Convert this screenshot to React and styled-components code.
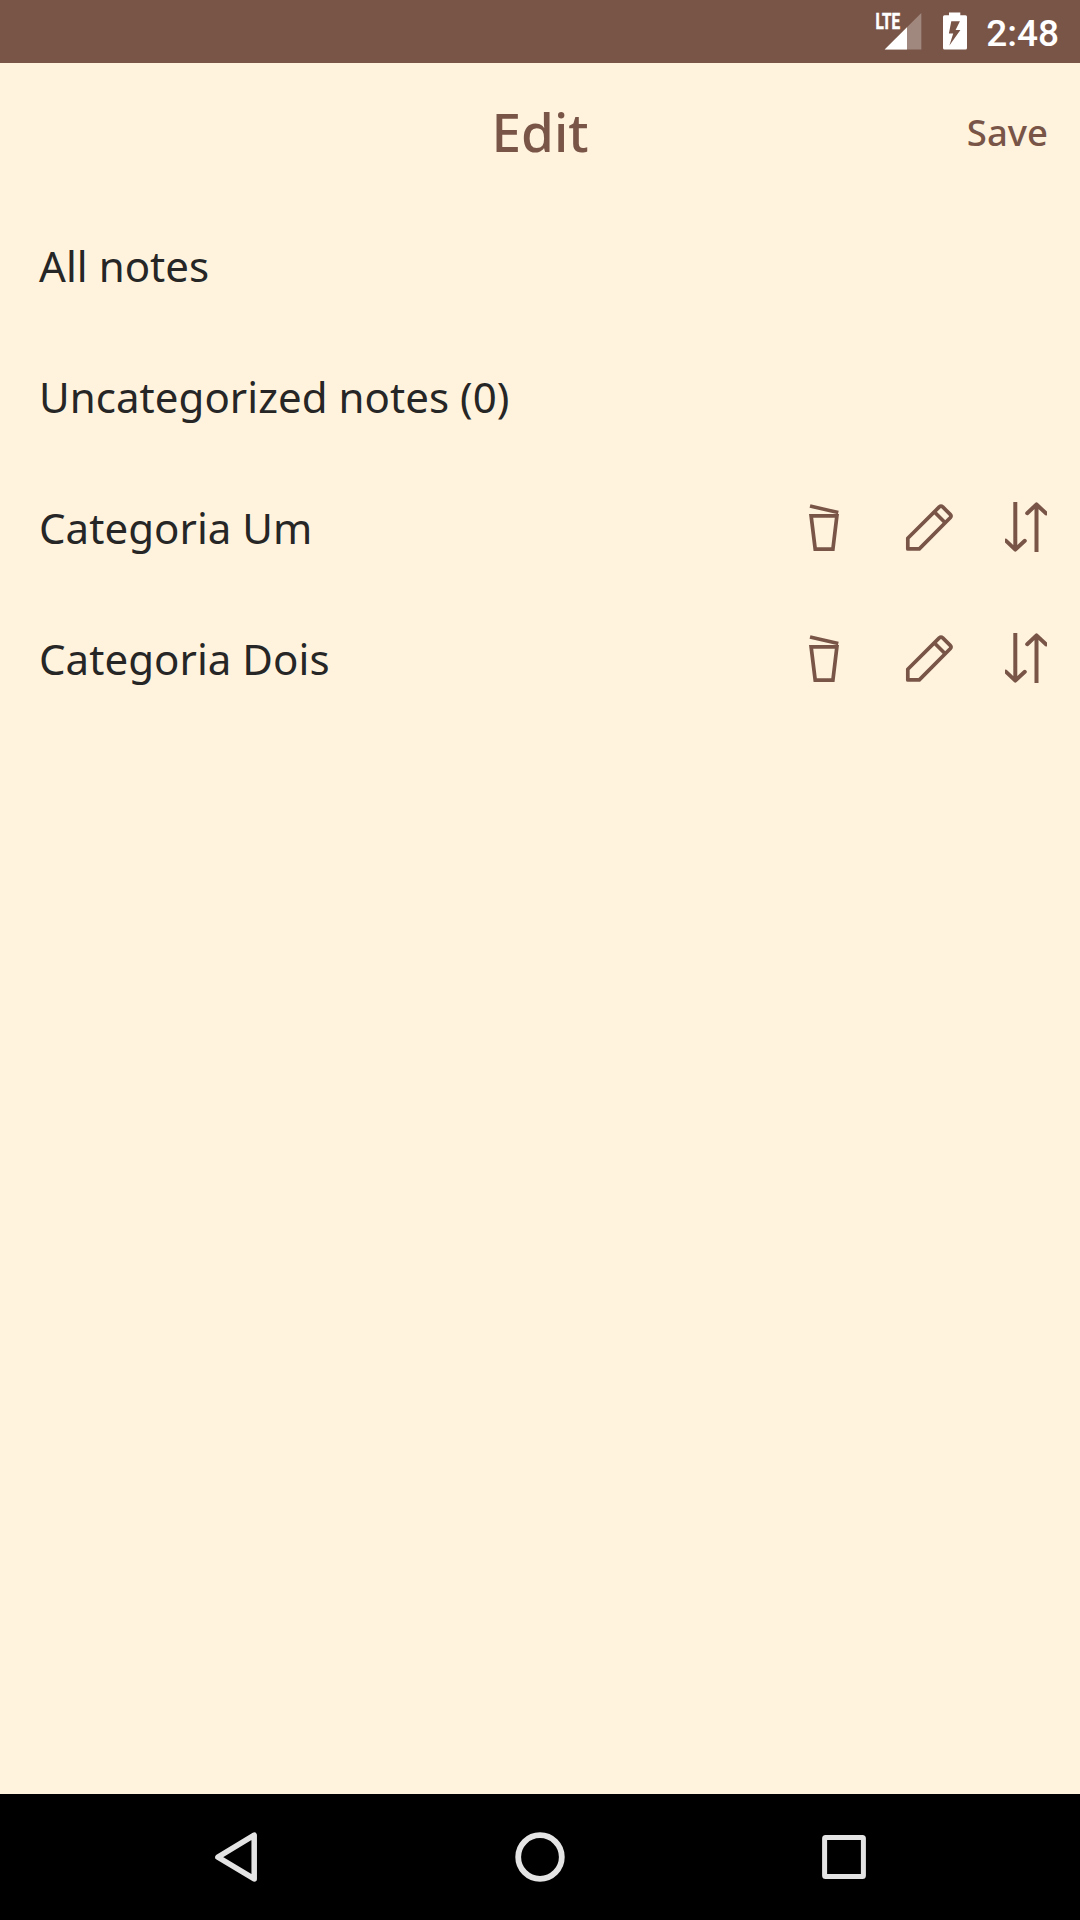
import React from "react";
import styled, { createGlobalStyle } from "styled-components";

const BROWN = "#795548";
const CREAM = "#fff3dd";

const GlobalStyle = createGlobalStyle`
  *, *::before, *::after { box-sizing: border-box; }
  body { margin: 0; background: ${CREAM}; }
  svg { display: block; flex: none; }
`;

const Screen = styled.div`
  width: 1080px;
  height: 1920px;
  display: flex;
  flex-direction: column;
  background: ${CREAM};
  font-family: "Noto Sans", sans-serif;
`;

const StatusBar = styled.header`
  height: 63px;
  flex: none;
  display: flex;
  align-items: center;
  justify-content: flex-end;
  padding-right: 21px;
  background: ${BROWN};
`;

const Clock = styled.time`
  padding-top: 4px;
  margin-left: 16px;
  font: 500 37px/42px Roboto, sans-serif;
  color: #fff;
`;

const Header = styled.div`
  height: 137px;
  flex: none;
  display: grid;
  grid-template-columns: 1fr auto 1fr;
  align-items: center;
  padding: 0 32px;
  color: ${BROWN};
`;

const Title = styled.h1`
  grid-column: 2;
  margin: 0;
  font-size: 53px;
  line-height: 74px;
  font-weight: 500;
`;

const SaveButton = styled.button`
  justify-self: end;
  border: 0;
  padding: 0;
  background: none;
  color: inherit;
  font: inherit;
  font-size: 36.5px;
  line-height: 50px;
  font-weight: 500;
`;

const List = styled.ul`
  flex: 1;
  margin: 0;
  padding: 0;
  list-style: none;
`;

const Row = styled.li`
  height: 131px;
  display: flex;
  align-items: center;
  justify-content: space-between;
  padding: 0 10px 0 39px;
`;

const Label = styled.span`
  font-size: 42px;
  line-height: 58px;
  letter-spacing: 0.05px;
  color: #262626;
  white-space: nowrap;
`;

const Actions = styled.div`
  display: flex;
  gap: 20px;
`;

const ActionIcon = styled.svg.attrs({ viewBox: "0 0 80 75" })`
  width: 80px;
  height: 75px;
  fill: none;
  stroke: ${BROWN};
  stroke-width: ${(p) => p.$weight}px;
`;

const NavBar = styled.nav`
  height: 126px;
  flex: none;
  display: flex;
  justify-content: center;
  gap: 220px;
  background: #000;
`;

const NavIcon = styled.svg.attrs({ viewBox: "0 0 80 126" })`
  width: 80px;
  height: 126px;
  fill: none;
  stroke: #e4e4e4;
  stroke-width: ${(p) => p.$weight}px;
  stroke-linejoin: round;
`;

const NetworkLabel = styled.text`
  font: 700 22px Roboto, sans-serif;
  fill: #fff;
  stroke: #fff;
  stroke-width: 0.6px;
`;

const Trash = () => (
  <ActionIcon $weight={3.7}>
    <path d="M21.1 25.8H46.9L42.9 59.1H25.2Z" />
    <path d="M20 16L48.3 22.6" strokeWidth="3.6" />
  </ActionIcon>
);

const Pencil = () => (
  <ActionIcon $weight={3.7}>
    <path
      strokeLinejoin="round"
      d="M17.8 58.9V48.2L49.3 16.9Q51 15.3 52.7 16.9L60.2 24.4Q61.8 26 60.2 27.7L29.3 58.9Z"
    />
    <path d="M44.2 21.8L55.2 32.8" />
  </ActionIcon>
);

const Reorder = ({ id }) => (
  <ActionIcon $weight={4}>
    <clipPath id={id}>
      <rect x="15" y="12" width="42" height="50" />
    </clipPath>
    <g clipPath={`url(#${id})`} strokeLinecap="round" strokeLinejoin="round">
      <path d="M25.3 10V59.5M15.8 50.6L25.3 59.6L34.8 50.8" />
      <path d="M46.5 64V14.5M37.2 23.2L46.5 14.4L56 23.4" />
    </g>
  </ActionIcon>
);

const categories = [
  { name: "All notes" },
  { name: "Uncategorized notes (0)" },
  { name: "Categoria Um", editable: true },
  { name: "Categoria Dois", editable: true },
];

export default function App() {
  return (
    <Screen>
      <GlobalStyle />
      <StatusBar>
        <svg width="110" height="63" viewBox="0 0 110 63">
          <path d="M24.7 49.5L61.3 13V49.5Z" fill="#fff" fillOpacity=".3" />
          <path d="M24.7 49.5L47 27.2V49.5Z" fill="#fff" />
          <NetworkLabel x="15.5" y="29" textLength="24.6" lengthAdjust="spacingAndGlyphs">
            LTE
          </NetworkLabel>
          <path
            fill="#fff"
            fillRule="evenodd"
            d="M89 12.4H100.3V15.2H105.5Q107 15.2 107 16.7V48Q107 49.6 105.5 49.6H84.5Q83 49.6 83 48V16.7Q83 15.2 84.5 15.2H89ZM91.3 21.3L88.9 33.6H93.2L89.4 45.6L100.4 30H95.6L99.9 21.3Z"
          />
        </svg>
        <Clock>2:48</Clock>
      </StatusBar>
      <Header>
        <Title>Edit</Title>
        <SaveButton>Save</SaveButton>
      </Header>
      <List>
        {categories.map(({ name, editable }, i) => (
          <Row key={name}>
            <Label>{name}</Label>
            {editable && (
              <Actions>
                <Trash />
                <Pencil />
                <Reorder id={`reorder-${i}`} />
              </Actions>
            )}
          </Row>
        ))}
      </List>
      <NavBar>
        <NavIcon $weight={5.5}>
          <path d="M17.9 63.2L54.2 41.2V84.9Z" />
        </NavIcon>
        <NavIcon $weight={5.8}>
          <circle cx="40" cy="63" r="21.8" />
        </NavIcon>
        <NavIcon $weight={5}>
          <rect x="24.6" y="43.6" width="38.8" height="38.8" rx="1" />
        </NavIcon>
      </NavBar>
    </Screen>
  );
}
